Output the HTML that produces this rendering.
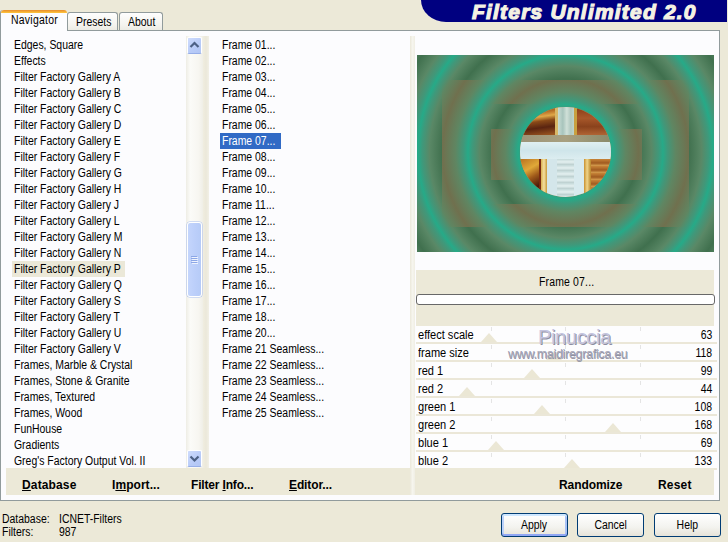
<!DOCTYPE html>
<html><head><meta charset="utf-8">
<style>
*{margin:0;padding:0;box-sizing:border-box}
html,body{width:728px;height:542px;overflow:hidden;background:#ece9d8;font-family:"Liberation Sans",sans-serif;font-size:11px;color:#000}
.a{position:absolute}
.t{position:absolute;white-space:nowrap;line-height:13px;font-size:12px;transform:scaleX(0.87);transform-origin:0 0}
#banner{left:421px;top:0;width:306px;height:22px;background:#000080;border-bottom-left-radius:25px 22px}
#btitle{transform:none;left:472px;top:1px;font-size:21px;font-weight:bold;font-style:italic;color:#f4f2e4;letter-spacing:1.2px;-webkit-text-stroke:1.2px #f4f2e4;line-height:22px}
.tab{position:absolute;top:12px;height:18px;border:1px solid #919b9c;border-bottom:none;border-radius:3px 3px 0 0;background:linear-gradient(#fefefe,#f4f3ee 70%,#ecebe4)}
#panel{left:0;top:30px;width:720px;height:471px;border:1px solid #919b9c;background:#fcfcfe}
#navtab{left:0;top:10px;width:67px;height:21px;background:#fcfcfe;border-left:1px solid #919b9c;border-radius:3px 3px 0 0}
#navtab:before{content:"";position:absolute;left:0;right:0;top:0;height:3px;background:linear-gradient(#e68b2c,#ffc73c);border-radius:3px 3px 0 0}
.row{position:absolute;height:16px;line-height:16px;font-size:12px;white-space:nowrap;transform:scaleX(0.87);transform-origin:0 0}
.bb{position:absolute;top:479px;font-size:12px;font-weight:bold;letter-spacing:0;line-height:13px;white-space:nowrap}
.u{text-decoration:underline}
.btn{position:absolute;top:513px;width:67px;height:24px;border:1px solid #003c74;border-radius:3px;background:linear-gradient(#fff,#f3f3ef 60%,#e6e3d9);text-align:center;line-height:23px}
.btn span{display:inline-block;font-size:12px;transform:scaleX(0.87)}
.sl{position:absolute;left:416px;width:301px;height:18px;background:#fdfdfe;border-bottom:2px solid #ebe7d8}
.sl .lbl{position:absolute;left:2px;top:3px;line-height:13px;font-size:12px;white-space:nowrap;transform:scaleX(0.92);transform-origin:0 0}
.sl:before{content:"";position:absolute;left:75px;top:1px;width:150px;height:4px;background:linear-gradient(90deg,#e4e4e4 1px,transparent 1px,transparent 74px,#e4e4e4 74px,#e4e4e4 75px,transparent 75px,transparent 149px,#e4e4e4 149px)}
.sl .val{position:absolute;right:5px;top:3px;line-height:13px;font-size:12px;transform:scaleX(0.87);transform-origin:100% 0}
.sl .tri{position:absolute;bottom:0;width:0;height:0;border-left:8px solid transparent;border-right:8px solid transparent;border-bottom:9px solid #ebe7d5}
</style></head><body>
<div class="a" id="banner"></div>
<div class="t" id="btitle">Filters Unlimited 2.0</div>

<div class="a" id="panel"></div>
<div class="tab" style="left:67px;width:51px"></div>
<div class="tab" style="left:119px;width:44px"></div>
<div class="a" id="navtab"></div>
<div class="t" style="left:11px;top:14px;letter-spacing:0.3px">Navigator</div>
<div class="t" style="left:76px;top:16px">Presets</div>
<div class="t" style="left:128px;top:16px">About</div>

<!-- left list -->
<div class="a" id="left" style="left:0;top:0">
<div class="row" style="left:14px;top:37px">Edges, Square</div>
<div class="row" style="left:14px;top:53px">Effects</div>
<div class="row" style="left:14px;top:69px">Filter Factory Gallery A</div>
<div class="row" style="left:14px;top:85px">Filter Factory Gallery B</div>
<div class="row" style="left:14px;top:101px">Filter Factory Gallery C</div>
<div class="row" style="left:14px;top:117px">Filter Factory Gallery D</div>
<div class="row" style="left:14px;top:133px">Filter Factory Gallery E</div>
<div class="row" style="left:14px;top:149px">Filter Factory Gallery F</div>
<div class="row" style="left:14px;top:165px">Filter Factory Gallery G</div>
<div class="row" style="left:14px;top:181px">Filter Factory Gallery H</div>
<div class="row" style="left:14px;top:197px">Filter Factory Gallery J</div>
<div class="row" style="left:14px;top:213px">Filter Factory Gallery L</div>
<div class="row" style="left:14px;top:229px">Filter Factory Gallery M</div>
<div class="row" style="left:14px;top:245px">Filter Factory Gallery N</div>
<div class="a" style="left:12px;top:261px;width:113px;height:16px;background:#ebe8d8"></div><div class="row" style="left:14px;top:261px">Filter Factory Gallery P</div>
<div class="row" style="left:14px;top:277px">Filter Factory Gallery Q</div>
<div class="row" style="left:14px;top:293px">Filter Factory Gallery S</div>
<div class="row" style="left:14px;top:309px">Filter Factory Gallery T</div>
<div class="row" style="left:14px;top:325px">Filter Factory Gallery U</div>
<div class="row" style="left:14px;top:341px">Filter Factory Gallery V</div>
<div class="row" style="left:14px;top:357px">Frames, Marble &amp; Crystal</div>
<div class="row" style="left:14px;top:373px">Frames, Stone &amp; Granite</div>
<div class="row" style="left:14px;top:389px">Frames, Textured</div>
<div class="row" style="left:14px;top:405px">Frames, Wood</div>
<div class="row" style="left:14px;top:421px">FunHouse</div>
<div class="row" style="left:14px;top:437px">Gradients</div>
<div class="row" style="left:14px;top:453px">Greg's Factory Output Vol. II</div>
</div>

<!-- scrollbar -->
<div class="a" style="left:186px;top:36px;width:17px;height:432px;background:linear-gradient(90deg,#eeede5,#fbfbf8 25%,#f7f6f1 75%,#efeee6)"></div>
<div class="a" style="left:187px;top:37px;width:15px;height:17px;border-radius:2px;background:linear-gradient(135deg,#cfdcfd,#b8cbf8 60%,#b2c6f4);border:1px solid #fff;border-bottom:1px solid #96aee8"></div>
<svg class="a" style="left:187px;top:37px" width="15" height="17"><path d="M3.5 10 L7.5 6 L11.5 10" fill="none" stroke="#4d6185" stroke-width="2.2"/></svg>
<div class="a" style="left:187px;top:222px;width:15px;height:75px;border-radius:3px;background:linear-gradient(90deg,#c4d5fc,#bccffa 50%,#b6cbf7);border:1px solid #fff;box-shadow:0 0 0 0.5px #a8bdf0"></div>
<svg class="a" style="left:187px;top:255px" width="15" height="10"><path d="M4 1.5H10M4 3.5H10M4 5.5H10M4 7.5H10" stroke="#8ca6e6" stroke-width="1"/><path d="M5 2.5H11M5 4.5H11M5 6.5H11M5 8.5H11" stroke="#eef3fe" stroke-width="1"/></svg>
<div class="a" style="left:187px;top:450px;width:15px;height:17px;border-radius:2px;background:linear-gradient(135deg,#cfdcfd,#b8cbf8 60%,#b2c6f4);border:1px solid #fff;border-bottom:1px solid #96aee8"></div>
<svg class="a" style="left:187px;top:450px" width="15" height="17"><path d="M3.5 6.5 L7.5 10.5 L11.5 6.5" fill="none" stroke="#4d6185" stroke-width="2.2"/></svg>
<div class="a" style="left:203px;top:36px;width:6px;height:432px;background:linear-gradient(90deg,#f0ede0,#ebe8da 50%,#f2f0e6)"></div>

<!-- middle list -->
<div class="row" style="left:222px;top:37px">Frame 01...</div>
<div class="row" style="left:222px;top:53px">Frame 02...</div>
<div class="row" style="left:222px;top:69px">Frame 03...</div>
<div class="row" style="left:222px;top:85px">Frame 04...</div>
<div class="row" style="left:222px;top:101px">Frame 05...</div>
<div class="row" style="left:222px;top:117px">Frame 06...</div>
<div class="a" style="left:220px;top:133px;width:61px;height:16px;background:#316ac5"></div><div class="row" style="left:222px;top:133px;color:#fff">Frame 07...</div>
<div class="row" style="left:222px;top:149px">Frame 08...</div>
<div class="row" style="left:222px;top:165px">Frame 09...</div>
<div class="row" style="left:222px;top:181px">Frame 10...</div>
<div class="row" style="left:222px;top:197px">Frame 11...</div>
<div class="row" style="left:222px;top:213px">Frame 12...</div>
<div class="row" style="left:222px;top:229px">Frame 13...</div>
<div class="row" style="left:222px;top:245px">Frame 14...</div>
<div class="row" style="left:222px;top:261px">Frame 15...</div>
<div class="row" style="left:222px;top:277px">Frame 16...</div>
<div class="row" style="left:222px;top:293px">Frame 17...</div>
<div class="row" style="left:222px;top:309px">Frame 18...</div>
<div class="row" style="left:222px;top:325px">Frame 20...</div>
<div class="row" style="left:222px;top:341px">Frame 21 Seamless...</div>
<div class="row" style="left:222px;top:357px">Frame 22 Seamless...</div>
<div class="row" style="left:222px;top:373px">Frame 23 Seamless...</div>
<div class="row" style="left:222px;top:389px">Frame 24 Seamless...</div>
<div class="row" style="left:222px;top:405px">Frame 25 Seamless...</div>

<!-- separator -->
<div class="a" style="left:410px;top:36px;width:5px;height:432px;background:linear-gradient(90deg,#ebe8da,#f6f5ee 50%,#f0eee4)"></div>

<!-- preview -->
<div class="a" id="preview" style="left:417px;top:55px;width:297px;height:197px;overflow:hidden"><div class="a" style="left:0px;top:0px;width:297px;height:197px;overflow:hidden"><div class="a" style="left:0px;top:0px;width:297px;height:197px;background:repeating-radial-gradient(circle at 148.5px 97px,#40704e 23px,#5a8866 36px,#40987a 43px,#26aa88 47.5px,#40987a 52px,#5a8866 60px,#40704e 73px)"></div></div><div class="a" style="left:25px;top:25px;width:247px;height:147px;overflow:hidden"><div class="a" style="left:-25px;top:-25px;width:297px;height:197px;background:repeating-radial-gradient(circle at 148.5px 97px,#70704e 23px,#5f8662 36px,#40987a 43px,#26aa88 47.5px,#40987a 52px,#5f8662 60px,#70704e 73px)"></div></div><div class="a" style="left:51px;top:49px;width:195px;height:100px;overflow:hidden"><div class="a" style="left:1.0px;top:-48.5px;width:193.0px;height:193.0px;border-radius:50%;overflow:hidden"><div class="a" style="left:-52.0px;top:-0.5px;width:297px;height:197px;background:repeating-radial-gradient(circle at 148.5px 97px,#40704e 23px,#5a8866 36px,#40987a 43px,#26aa88 47.5px,#40987a 52px,#5a8866 60px,#40704e 73px)"></div></div></div><div class="a" style="left:74px;top:74px;width:151px;height:51px;overflow:hidden"><div class="a" style="left:-74px;top:-74px;width:297px;height:197px;background:repeating-radial-gradient(circle at 148.5px 97px,#70704e 23px,#5f8662 36px,#40987a 43px,#26aa88 47.5px,#40987a 52px,#5f8662 60px,#70704e 73px)"></div></div><div class="a" id="photo" style="left:103px;top:52px;width:91px;height:90px;border-radius:50%;overflow:hidden;background:#c8a060"><div class="a" style="left:0px;top:0px;width:35px;height:28px;background:linear-gradient(172deg,#7a3a14 0%,#b87028 25%,#e0a848 38%,#8a4a18 52%,#5a2410 72%,#a05a22 100%)"></div><div class="a" style="left:35px;top:0px;width:3px;height:28px;background:#d8b868"></div><div class="a" style="left:38px;top:0px;width:16px;height:28px;background:linear-gradient(90deg,#c8dcd4,#a8c4bc 30%,#d0e0d8 55%,#b0c8c0 80%,#c0d4cc)"></div><div class="a" style="left:54px;top:0px;width:3px;height:28px;background:#c8a040"></div><div class="a" style="left:57px;top:0px;width:34px;height:28px;background:linear-gradient(180deg,#8a3c16,#a8582a 40%,#8a421c 70%,#b06434 100%)"></div><div class="a" style="left:0px;top:28px;width:91px;height:7px;background:linear-gradient(90deg,#9c9478,#a8a080 50%,#8a8a6a)"></div><div class="a" style="left:0px;top:35px;width:91px;height:17px;background:linear-gradient(180deg,#e0f0f2,#cfe5ea 50%,#dcedf0)"></div><div class="a" style="left:0px;top:52px;width:21px;height:38px;background:linear-gradient(150deg,#b87020 0%,#e0a838 30%,#a05a1a 50%,#4a1a0a 75%,#8a4418 100%)"></div><div class="a" style="left:19px;top:52px;width:2px;height:38px;background:#7a2a10"></div><div class="a" style="left:21px;top:52px;width:6px;height:38px;background:linear-gradient(90deg,#d8b050,#f4e0a0 50%,#c89838)"></div><div class="a" style="left:27px;top:52px;width:10px;height:38px;background:#d4e6ea"></div><div class="a" style="left:37px;top:52px;width:17px;height:38px;background:repeating-linear-gradient(180deg,#c4d8d8 0px,#e4f0f0 3px,#b8cccc 6px)"></div><div class="a" style="left:54px;top:52px;width:10px;height:38px;background:#d8eaee"></div><div class="a" style="left:64px;top:52px;width:7px;height:38px;background:linear-gradient(90deg,#c89030,#f0d488 45%,#b88428)"></div><div class="a" style="left:71px;top:52px;width:20px;height:38px;background:repeating-linear-gradient(180deg,#c88438 0px,#a05a20 4px,#d8a050 7px)"></div></div></div>

<!-- label bar -->
<div class="a" style="left:416px;top:270px;width:298px;height:56px;background:#ece9d8"></div>
<div class="t" style="left:539px;top:276px;letter-spacing:0.2px">Frame 07...</div>
<div class="a" style="left:416px;top:294px;width:299px;height:11px;border:1px solid #686868;border-radius:3px;background:#fff"></div>

<!-- sliders -->
<div class="sl" style="top:326px"><span class="lbl">effect scale</span><span class="tri" style="left:65px"></span><span class="val">63</span></div>
<div class="sl" style="top:344px"><span class="lbl">frame size</span><span class="tri" style="left:130px"></span><span class="val">118</span></div>
<div class="sl" style="top:362px"><span class="lbl">red 1</span><span class="tri" style="left:108px"></span><span class="val">99</span></div>
<div class="sl" style="top:380px"><span class="lbl">red 2</span><span class="tri" style="left:43px"></span><span class="val">44</span></div>
<div class="sl" style="top:398px"><span class="lbl">green 1</span><span class="tri" style="left:118px"></span><span class="val">108</span></div>
<div class="sl" style="top:416px"><span class="lbl">green 2</span><span class="tri" style="left:189px"></span><span class="val">168</span></div>
<div class="sl" style="top:434px"><span class="lbl">blue 1</span><span class="tri" style="left:72px"></span><span class="val">69</span></div>
<div class="sl" style="top:452px"><span class="lbl">blue 2</span><span class="tri" style="left:148px"></span><span class="val">133</span></div>

<!-- watermark -->
<div class="t" style="transform:none;left:538px;top:326px;font-size:20px;line-height:22px;letter-spacing:-0.35px;color:#c4c4de;text-shadow:1px 1px 0 #8e8ea0">Pinuccia</div>
<div class="t" style="transform:none;left:508px;top:347px;font-size:12.5px;line-height:14px;letter-spacing:-0.3px;color:#a4a4b6;text-shadow:0.5px 0.5px 0 #9090a0">www.maidiregrafica.eu</div>

<!-- button bar -->
<div class="a" style="left:6px;top:468px;width:708px;height:27px;background:#ece9d8"></div>
<div class="bb" style="left:22px;letter-spacing:0.14px"><span class="u">D</span>atabase</div>
<div class="bb" style="left:112px;letter-spacing:0.05px">I<span class="u">m</span>port...</div>
<div class="bb" style="left:191px;letter-spacing:-0.17px">Filter <span class="u">I</span>nfo...</div>
<div class="bb" style="left:289px;letter-spacing:-0.12px"><span class="u">E</span>ditor...</div>
<div class="bb" style="left:559px;letter-spacing:-0.07px">Randomize</div>
<div class="bb" style="left:658px;letter-spacing:0.2px">Reset</div>

<div class="a" style="left:410px;top:468px;width:5px;height:27px;background:linear-gradient(90deg,#ebe8da,#f6f5ee 50%,#f0eee4)"></div>

<!-- status -->
<div class="t" style="left:2px;top:513px">Database:</div>
<div class="t" style="left:59px;top:513px">ICNET-Filters</div>
<div class="t" style="left:2px;top:526px">Filters:</div>
<div class="t" style="left:59px;top:526px">987</div>

<div class="btn" style="left:501px;border-color:#003c74;box-shadow:inset 0 -2px 0 #91a7f4,inset 0 2px 0 #cee7ff,inset 2px 0 0 #bcd2fa,inset -2px 0 0 #a9c2f6"><span>Apply</span></div>
<div class="btn" style="left:577px"><span>Cancel</span></div>
<div class="btn" style="left:654px"><span>Help</span></div>
</body></html>
